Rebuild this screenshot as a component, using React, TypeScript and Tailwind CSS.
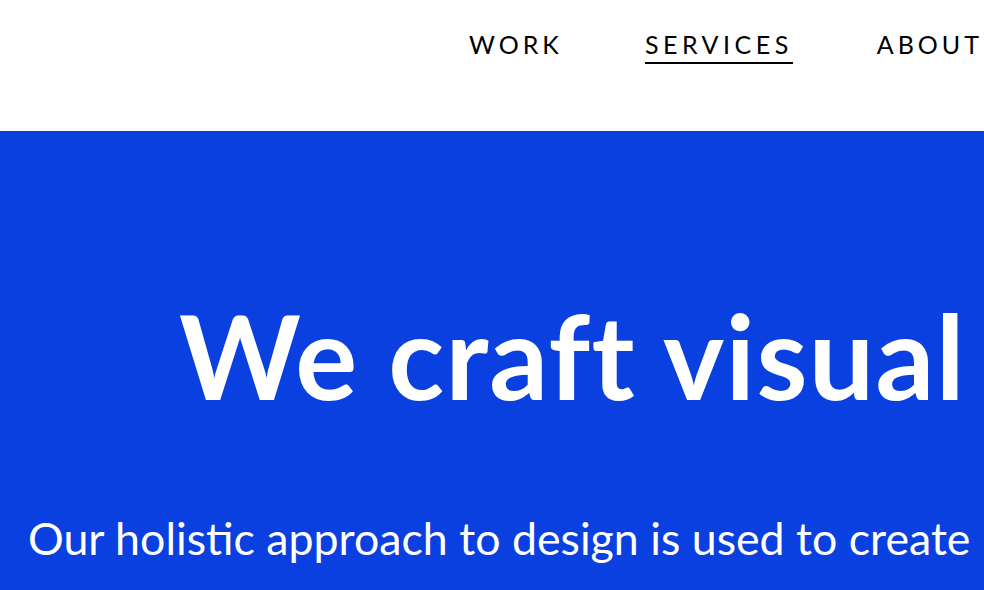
export default function App() {
  const nav = ['WORK', 'SERVICES', 'ABOUT']
  return (
    <div className="w-[984px] h-[590px] overflow-hidden bg-white font-['Lato',sans-serif]">
      {/* Header */}
      <header className="h-[131px] bg-white flex items-start pt-[26px] pl-[469px] whitespace-nowrap">
        <nav className="flex gap-[84px]">
          {nav.map((item) => (
            <a
              key={item}
              href="#"
              className={
                item === 'SERVICES'
                  ? 'text-[25px] leading-[36px] tracking-[0.18em] text-black border-b-2 border-black pb-[0px] -ml-[2px]'
                  : 'text-[25px] leading-[36px] tracking-[0.16em] text-black pb-[2px]'
              }
            >
              {item}
            </a>
          ))}
        </nav>
      </header>

      {/* Hero */}
      <section className="h-[459px] bg-[#0b40e0] text-white whitespace-nowrap">
        <h1 className="pl-[179px] pt-[167px] text-[116px] leading-none font-bold tracking-[0.012em]">
          We craft visual
        </h1>
        <p className="pl-[28px] pt-[102px] text-[44.7px] leading-none">
          Our holistic approach to design is used to create
        </p>
      </section>
    </div>
  )
}
